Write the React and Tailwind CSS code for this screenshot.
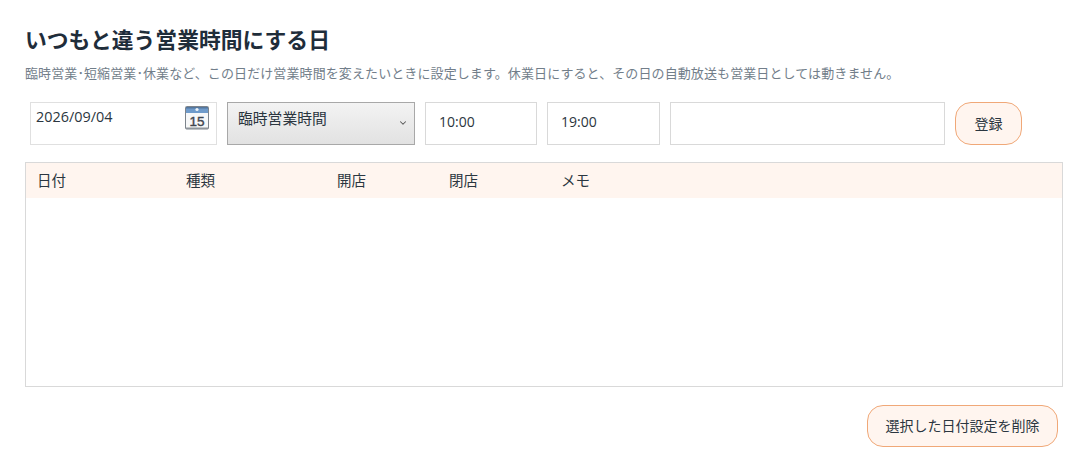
import React from 'react';
import { ChevronDown } from 'lucide-react';

function CalendarIcon() {
  return (
    <svg width="24" height="24" viewBox="0 0 24 24" className="block">
      <rect x="0.5" y="0.5" width="23" height="22.5" rx="1" fill="#f7f8f9" stroke="#7d848c" />
      <rect x="1" y="1" width="22" height="6" fill="#6f9bcb" />
      <rect x="1" y="1" width="22" height="1.5" fill="#54779e" />
      <circle cx="12" cy="3.5" r="1.6" fill="#eef3f8" />
      <rect x="1" y="21.5" width="22" height="1.5" fill="#8f959c" />
      <text x="12" y="19.5" textAnchor="middle" fontSize="13.5" fontWeight="400" stroke="#3f4650" strokeWidth="0.4" fontFamily="'Liberation Sans', sans-serif" fill="#3f4650">15</text>
    </svg>
  );
}

const columns = [
  { label: '日付', className: 'w-[149px]' },
  { label: '種類', className: 'w-[151px]' },
  { label: '開店', className: 'w-[112px]' },
  { label: '閉店', className: 'w-[112px]' },
  { label: 'メモ', className: 'flex-1' },
];

export default function App() {
  return (
    <div className="h-[462px] w-[1069px] overflow-hidden bg-white pl-[25px] pr-[6px] pt-[24px] font-['Open_Sans','Noto_Sans_CJK_JP',sans-serif] text-[#2b3640]">
      <h2 className="text-[21.8px] font-bold leading-[32px] text-[#1f2d3a]">いつもと違う営業時間にする日</h2>
      <p className="mt-[7px] text-[13px] leading-[20px] tracking-[0.1px] text-[#727e8a]">
        臨時営業･短縮営業･休業など、この日だけ営業時間を変えたいときに設定します。休業日にすると、その日の自動放送も営業日としては動きません。
      </p>

      <div className="mt-[19px] flex items-stretch gap-[10px] pl-[5px]">
        <div className="flex h-[43px] w-[187px] items-start justify-between border border-[#e0e0e0] pl-[5px] pr-[7px]">
          <span className="mt-[4px] text-[14.4px] leading-[20px]">2026/09/04</span>
          <span className="mt-[3px]"><CalendarIcon /></span>
        </div>
        <div className="flex h-[43px] w-[188px] items-start justify-between border border-[#a8a8a8] bg-gradient-to-b from-[#f3f3f3] to-[#e2e2e2] pl-[10px] pr-[6px]">
          <span className="mt-[5px] text-[14.8px] leading-[20px]">臨時営業時間</span>
          <ChevronDown size={10} strokeWidth={2.5} className="mt-[15px] text-[#555]" />
        </div>
        <div className="flex h-[43px] w-[112px] items-center border border-[#d9d9d9] px-[13px] pb-[4px] text-[14px]">10:00</div>
        <div className="flex h-[43px] w-[113px] items-center border border-[#d9d9d9] px-[13px] pb-[4px] text-[14px]">19:00</div>
        <div className="h-[43px] w-[275px] border border-[#d9d9d9]" />
        <button className="h-[43px] w-[67px] rounded-[16px] border border-[#f0a878] bg-[#fff5ef] text-[14px] text-[#2b3640]">登録</button>
      </div>

      <div className="mt-[17px] h-[225px] w-[1038px] border border-[#d9d9d9]">
        <div className="flex h-[35px] items-center bg-[#fff5ef] pl-[11px] text-[14.5px]">
          {columns.map((c) => (
            <div key={c.label} className={c.className}>{c.label}</div>
          ))}
        </div>
      </div>

      <div className="mt-[18px] flex justify-end pr-[5px]">
        <button className="h-[42px] w-[191px] rounded-[16px] border border-[#f0a878] bg-[#fff5ef] pb-[2px] text-[14px] text-[#2b3640]">選択した日付設定を削除</button>
      </div>
    </div>
  );
}
